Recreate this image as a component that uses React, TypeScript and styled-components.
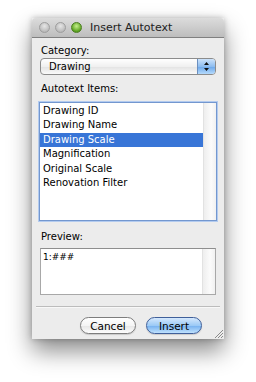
import * as React from 'react'
import styled, { createGlobalStyle } from 'styled-components'

const GlobalStyle = createGlobalStyle`
  html, body {
    margin: 0;
    padding: 0;
    background: #ffffff;
  }
  body {
    font-family: "DejaVu Sans", "Liberation Sans", sans-serif;
    font-size: 10px;
    color: #000;
  }
`

const Stage = styled.div`
  width: 256px;
  height: 382px;
  padding: 18px 0 0 32px;
  box-sizing: border-box;
`

const Window = styled.div`
  width: 192px;
  height: 321px;
  background: #ececec;
  display: flex;
  flex-direction: column;
  box-shadow: 0 12px 22px rgba(0, 0, 0, 0.45), 0 0 6px rgba(0, 0, 0, 0.25);
  position: relative;
`

const TitleBar = styled.div`
  height: 19px;
  display: flex;
  align-items: center;
  padding-left: 7px;
  background: linear-gradient(#dcdcdc, #bdbdbd);
  border-bottom: 1px solid #808080;
  border-radius: 4px 4px 0 0;
`

const Light = styled.span<{ $green?: boolean }>`
  width: 11px;
  height: 11px;
  border-radius: 50%;
  margin-right: ${p => (p.$green ? '8px' : '5px')};
  background: ${p => p.$green
    ? 'radial-gradient(circle at 50% 35%, #c6f08c, #5ba21f 70%, #3f7b10)'
    : 'radial-gradient(circle at 50% 35%, #e6e6e6, #bcbcbc 70%, #a5a5a5)'};
  border: 1px solid ${p => (p.$green ? '#4b7d22' : '#9e9e9e')};
  box-sizing: border-box;
`

const Title = styled.span`
  font-size: 11px;
  color: #222;
`

const Body = styled.div`
  flex: 1;
  padding: 6px 8px 0 8px;
  display: flex;
  flex-direction: column;
`

const Label = styled.div<{ $top: number }>`
  margin-top: ${p => p.$top}px;
  height: 13px;
  line-height: 13px;
  padding-left: 1px;
`

const Popup = styled.div`
  margin-top: 1px;
  height: 17px;
  box-sizing: border-box;
  border: 1px solid #8c8c8c;
  border-radius: 4px;
  background: linear-gradient(#ffffff, #f0f0f0 50%, #e2e2e2 51%, #fafafa);
  display: flex;
  align-items: center;
  overflow: hidden;
`

const PopupText = styled.span`
  flex: 1;
  padding-left: 8px;
  line-height: 15px;
`

const Stepper = styled.span`
  width: 17px;
  height: 15px;
  background: linear-gradient(#cde3fb, #8ebdf0 50%, #6aa6ea 51%, #b5dafc);
  border-left: 1px solid #6b8fbf;
  display: flex;
  align-items: center;
  justify-content: center;
`

const ListBox = styled.div`
  margin-top: 7px;
  height: 119px;
  box-sizing: border-box;
  border: 1px solid #7397cf;
  box-shadow: 0 0 0 1px #b3cbef;
  background: #fff;
  display: flex;
  margin-left: -1px;
  margin-right: -1px;
`

const Items = styled.div`
  flex: 1;
  padding-top: 1px;
`

const Item = styled.div<{ $selected?: boolean }>`
  height: 14.4px;
  line-height: 14.4px;
  padding-left: 3px;
  background: ${p => (p.$selected ? '#3875d7' : 'transparent')};
  color: ${p => (p.$selected ? '#fff' : '#000')};
`

const Track = styled.div`
  width: 12px;
  border-left: 1px solid #e2e2e2;
  background: linear-gradient(90deg, #eeeeee, #fbfbfb 60%, #f1f1f1);
`

const PreviewBox = styled.div`
  margin-top: 5px;
  height: 47px;
  box-sizing: border-box;
  border: 1px solid #a8a8a8;
  border-top-color: #8e8e8e;
  background: #fff;
  display: flex;
`

const PreviewText = styled.div`
  flex: 1;
  padding: 2px 0 0 2px;
  font-size: 9px;
  line-height: 12px;
`

const Separator = styled.div`
  margin: 11px -4px 0 -4px;
  height: 1px;
  background: #bcbcbc;
  border-bottom: 1px solid #f8f8f8;
`

const Buttons = styled.div`
  margin-top: 9px;
  display: flex;
  justify-content: flex-end;
  gap: 10px;
  padding-right: 14px;
`

const Button = styled.button<{ $primary?: boolean }>`
  width: 56px;
  height: 17px;
  padding: 0;
  border-radius: 9px;
  font-family: "DejaVu Sans", "Liberation Sans", sans-serif;
  font-size: 10.5px;
  color: #000;
  border: 1px solid ${p => (p.$primary ? '#3f5f9a' : '#7d7d7d')};
  background: ${p => p.$primary
    ? 'linear-gradient(#d5e8fd, #9ccaf6 50%, #74b0f0 51%, #bfe1fd)'
    : 'linear-gradient(#ffffff, #f5f5f5 50%, #e6e6e6 51%, #fdfdfd)'};
  box-shadow: 0 1px 1px rgba(0, 0, 0, 0.15);
`

const Grip = styled.svg`
  position: absolute;
  right: 1px;
  bottom: 1px;
`

export default function App() {
  const items = ['Drawing ID', 'Drawing Name', 'Drawing Scale', 'Magnification', 'Original Scale', 'Renovation Filter']
  return (
    <>
      <GlobalStyle />
      <Stage>
        <Window>
          <TitleBar>
            <Light />
            <Light />
            <Light $green />
            <Title>Insert Autotext</Title>
          </TitleBar>
          <Body>
            <Label $top={0}>Category:</Label>
            <Popup>
              <PopupText>Drawing</PopupText>
              <Stepper>
                <svg width="5" height="9" viewBox="0 0 5 9">
                  <path d="M2.5 0 L5 3 H0 Z M2.5 9 L5 6 H0 Z" fill="#111" />
                </svg>
              </Stepper>
            </Popup>
            <Label $top={7}>Autotext Items:</Label>
            <ListBox>
              <Items>
                {items.map(it => (
                  <Item key={it} $selected={it === 'Drawing Scale'}>{it}</Item>
                ))}
              </Items>
              <Track />
            </ListBox>
            <Label $top={9}>Preview:</Label>
            <PreviewBox>
              <PreviewText>1:###</PreviewText>
              <Track />
            </PreviewBox>
            <Separator />
            <Buttons>
              <Button>Cancel</Button>
              <Button $primary>Insert</Button>
            </Buttons>
          </Body>
          <Grip width="9" height="9" viewBox="0 0 9 9">
            <path d="M9 1 L1 9 M9 4 L4 9 M9 7 L7 9" stroke="#8a8a8a" strokeWidth="1" />
          </Grip>
        </Window>
      </Stage>
    </>
  )
}
